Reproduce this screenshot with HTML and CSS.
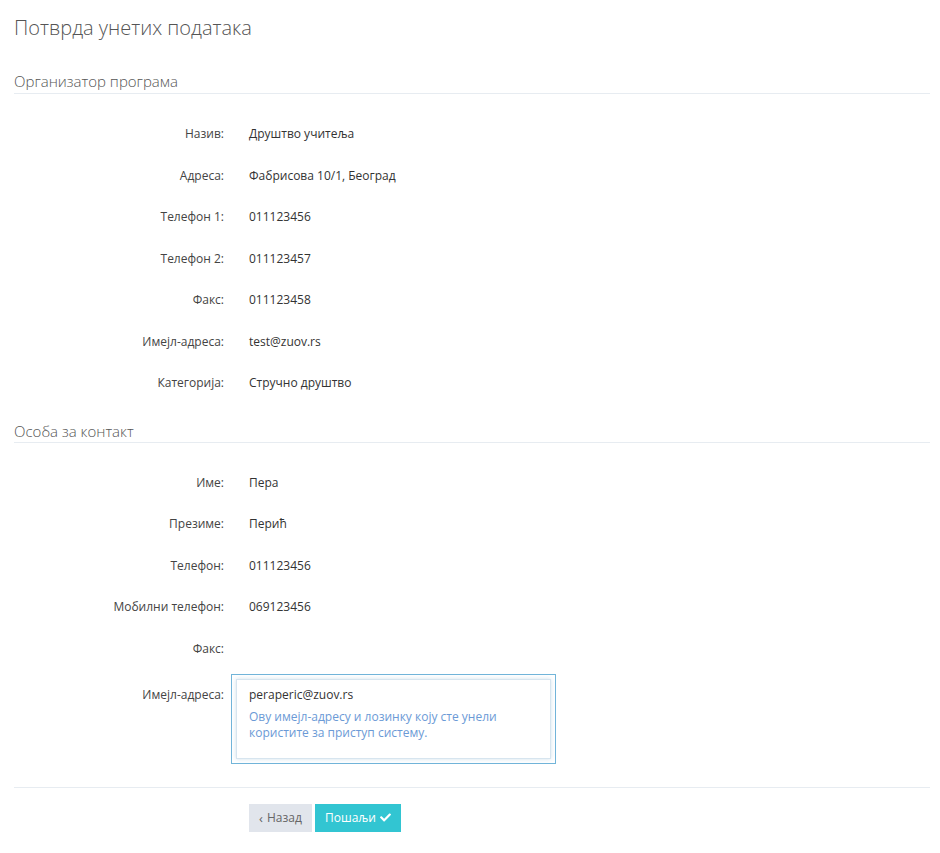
FILE: index.html
```html
<!DOCTYPE html>
<html lang="sr">
<head>
<meta charset="utf-8">
<title>Потврда унетих података</title>
<link rel="stylesheet" href="styles.css">
</head>
<body>
<div class="page">
  <h1 class="title">Потврда унетих података</h1>

  <h2 class="section">Организатор програма</h2>
  <div class="rows">
    <div class="row"><div class="label">Назив:</div><div class="value">Друштво учитеља</div></div>
    <div class="row"><div class="label">Адреса:</div><div class="value">Фабрисова 10/1, Београд</div></div>
    <div class="row"><div class="label">Телефон 1:</div><div class="value">011123456</div></div>
    <div class="row"><div class="label">Телефон 2:</div><div class="value">011123457</div></div>
    <div class="row"><div class="label">Факс:</div><div class="value">011123458</div></div>
    <div class="row"><div class="label">Имејл-адреса:</div><div class="value">test@zuov.rs</div></div>
    <div class="row"><div class="label">Категорија:</div><div class="value">Стручно друштво</div></div>
  </div>

  <h2 class="section section-2">Особа за контакт</h2>
  <div class="rows">
    <div class="row"><div class="label">Име:</div><div class="value">Пера</div></div>
    <div class="row"><div class="label">Презиме:</div><div class="value">Перић</div></div>
    <div class="row"><div class="label">Телефон:</div><div class="value">011123456</div></div>
    <div class="row"><div class="label">Мобилни телефон:</div><div class="value">069123456</div></div>
    <div class="row"><div class="label">Факс:</div><div class="value"></div></div>
    <div class="row row-email">
      <div class="label">Имејл-адреса:</div>
      <div class="email-box">
        <div class="email-inner">
          <div class="email-value">peraperic@zuov.rs</div>
          <div class="help">Ову имејл-адресу и лозинку коју сте унели<br>користите за приступ систему.</div>
        </div>
      </div>
    </div>
  </div>

  <div class="actions">
    <button class="btn btn-grey"><span class="chev">‹</span> Назад</button>
    <button class="btn btn-teal">Пошаљи <svg class="check" viewBox="0 0 512 512" aria-hidden="true"><path d="M173.9 439.4l-166.4-166.4c-10-10-10-26.2 0-36.2l36.2-36.2c10-10 26.2-10 36.2 0L192 312.7 432.1 72.6c10-10 26.2-10 36.2 0l36.2 36.2c10 10 10 26.2 0 36.2l-294.4 294.4c-10 10-26.2 10-36.2 0z"/></svg></button>
  </div>
</div>
</body>
</html>
```

FILE: styles.css
```css
html, body {
  margin: 0;
  padding: 0;
  background: #fff;
}
body {
  font-family: "Open Sans", "Noto Sans", sans-serif;
  color: #333;
  font-size: 12px;
}
.page {
  padding: 14px 10px 21px 14px;
}
.title {
  margin: 0;
  font-size: 20px;
  font-weight: 300;
  line-height: 28px;
  color: #555;
}
.section {
  margin: 29px 0 0 0;
  padding-bottom: 2px;
  font-size: 15px;
  font-weight: 300;
  line-height: 20px;
  color: #555;
  border-bottom: 1px solid #e7ecf1;
}
.section-2 {
  margin-top: 17px;
  padding-bottom: 1px;
}
.rows {
  margin-top: 19px;
}
.row {
  display: flex;
  align-items: center;
  height: 41.5px;
}
.label {
  width: 210px;
  flex: none;
  text-align: right;
  color: #444;
  padding-right: 25px;
}
.value {
  color: #333;
}
.row-email {
  height: auto;
  align-items: flex-start;
}
.row-email .label {
  padding-top: 17px;
}
.email-box {
  margin-top: 4.5px;
  margin-left: -18px;
  width: 315px;
  padding: 4px;
  border: 1px solid #72b5d9;
}
.email-inner {
  border: 1px solid #d7e5ef;
  box-shadow: 0 0 4px rgba(120, 170, 200, 0.35);
  padding: 6px 12px 17px 12px;
}
.email-value {
  line-height: 17px;
  color: #333;
}
.help {
  margin-top: 6px;
  line-height: 16px;
  color: #6b9ad6;
}
.actions {
  margin-top: 23px;
  border-top: 1px solid #e7ecf1;
  padding: 16px 0 0 235px;
  display: flex;
  gap: 3px;
}
.btn {
  font-family: "Open Sans", "Noto Sans", sans-serif;
  font-size: 12px;
  height: 28px;
  border: 0;
  padding: 0 10px;
  display: flex;
  align-items: center;
  gap: 4px;
}
.btn-grey {
  background: #e1e5ec;
  color: #666;
  width: 63px;
  padding: 0 10px;
}
.chev {
  font-size: 13px;
}
.btn-teal {
  background: #32c5d2;
  color: #fff;
  width: 86px;
  justify-content: center;
}
.check {
  width: 11px;
  height: 11px;
  fill: #fff;
}
```
